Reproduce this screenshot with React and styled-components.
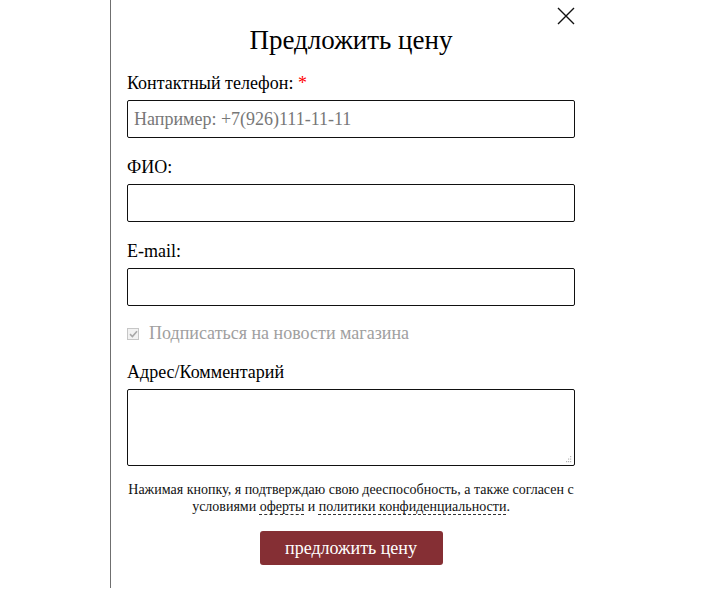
import React from "react";
import styled, { createGlobalStyle } from "styled-components";

const Global = createGlobalStyle`
  html, body { margin: 0; padding: 0; background: #fff; }
  body { font-family: "Liberation Serif", "Times New Roman", serif; color: #000; }
`;

const Page = styled.div`
  width: 718px;
  height: 597px;
  background: #fff;
  overflow: hidden;
`;

const Modal = styled.div`
  position: relative;
  box-sizing: border-box;
  margin-left: 110px;
  width: 480px;
  height: 588px;
  border-left: 1px solid #6f6f6f;
  padding: 25px 15px 0 16px;
  display: flex;
  flex-direction: column;
`;

const Close = styled.button`
  position: absolute;
  top: 7px;
  right: 15px;
  width: 18px;
  height: 18px;
  padding: 0;
  border: 0;
  background: transparent;
  cursor: pointer;
  svg { display: block; }
`;

const Title = styled.h2`
  margin: 0;
  font-weight: normal;
  font-size: 27px;
  line-height: 30px;
  text-align: center;
`;

const Field = styled.div`
  display: flex;
  flex-direction: column;
  margin-top: ${(p) => p.$top}px;
`;

const Label = styled.label`
  font-size: 18px;
  line-height: 20px;
  margin-bottom: 7px;
`;

const Req = styled.span`
  color: #f00;
`;

const Input = styled.input`
  box-sizing: border-box;
  width: 448px;
  height: 38px;
  border: 1px solid #111;
  border-radius: 2px;
  padding: 0 6px;
  font-family: "Liberation Serif", "Times New Roman", serif;
  font-size: 18px;
  outline: none;
  &::placeholder { color: #777; }
`;

const AreaWrap = styled.div`
  position: relative;
  width: 448px;
  height: 77px;
`;

const Textarea = styled.textarea`
  box-sizing: border-box;
  display: block;
  width: 448px;
  height: 77px;
  border: 1px solid #111;
  border-radius: 2px;
  padding: 6px;
  font-family: "Liberation Serif", "Times New Roman", serif;
  font-size: 18px;
  outline: none;
  resize: none;
`;

const Grip = styled.svg`
  position: absolute;
  right: 3px;
  bottom: 3px;
  pointer-events: none;
`;

const CheckRow = styled.label`
  display: flex;
  align-items: center;
  gap: 10px;
  margin-top: 17px;
  font-size: 18px;
  line-height: 20px;
  color: #a0a0a0;
`;

const Box = styled.span`
  box-sizing: border-box;
  width: 12px;
  height: 12px;
  border: 1px solid #c6c6c6;
  background: #f2f2f2;
  display: flex;
  align-items: center;
  justify-content: center;
  margin-top: 1px;
`;

const Note = styled.p`
  margin: 15px 0 0;
  font-size: 14px;
  line-height: 17px;
  text-align: center;
  color: #111;
`;

const DashLink = styled.a`
  color: inherit;
  text-decoration: underline dashed #333;
  text-decoration-thickness: 1px;
  text-underline-offset: 3px;
`;

const Submit = styled.button`
  align-self: center;
  margin-top: 16px;
  width: 183px;
  height: 34px;
  border: 0;
  border-radius: 3px;
  background: #852f34;
  color: #fff;
  font-family: "Liberation Serif", "Times New Roman", serif;
  font-size: 18px;
  cursor: pointer;
  padding: 0;
`;

export default function App() {
  return (
    <Page>
      <Global />
      <Modal>
        <Close aria-label="Закрыть">
          <svg width="18" height="18" viewBox="0 0 18 18">
            <path d="M1 1 L17 17 M17 1 L1 17" stroke="#111" strokeWidth="1.4" fill="none" />
          </svg>
        </Close>
        <Title>Предложить цену</Title>
        <Field $top={18}>
          <Label>
            Контактный телефон: <Req>*</Req>
          </Label>
          <Input placeholder="Например: +7(926)111-11-11" />
        </Field>
        <Field $top={19}>
          <Label>ФИО:</Label>
          <Input />
        </Field>
        <Field $top={19}>
          <Label>E-mail:</Label>
          <Input />
        </Field>
        <CheckRow>
          <Box>
            <svg width="9" height="8" viewBox="0 0 9 8">
              <path d="M1 4.2 L3.4 6.5 L8 1.2" stroke="#a8a8a8" strokeWidth="1.6" fill="none" />
            </svg>
          </Box>
          Подписаться на новости магазина
        </CheckRow>
        <Field $top={19}>
          <Label>Адрес/Комментарий</Label>
          <AreaWrap>
            <Textarea />
            <Grip width="7" height="7" viewBox="0 0 7 7">
              <g fill="#b5b5b5">
                <rect x="5" y="0" width="1.2" height="1.2" />
                <rect x="3" y="2.5" width="1.2" height="1.2" />
                <rect x="5" y="2.5" width="1.2" height="1.2" />
                <rect x="1" y="5" width="1.2" height="1.2" />
                <rect x="3" y="5" width="1.2" height="1.2" />
                <rect x="5" y="5" width="1.2" height="1.2" />
              </g>
            </Grip>
          </AreaWrap>
        </Field>
        <Note>
          Нажимая кнопку, я подтверждаю свою дееспособность, а также согласен с условиями{" "}
          <DashLink href="#">оферты</DashLink> и <DashLink href="#">политики конфиденциальности</DashLink>.
        </Note>
        <Submit>предложить цену</Submit>
      </Modal>
    </Page>
  );
}
